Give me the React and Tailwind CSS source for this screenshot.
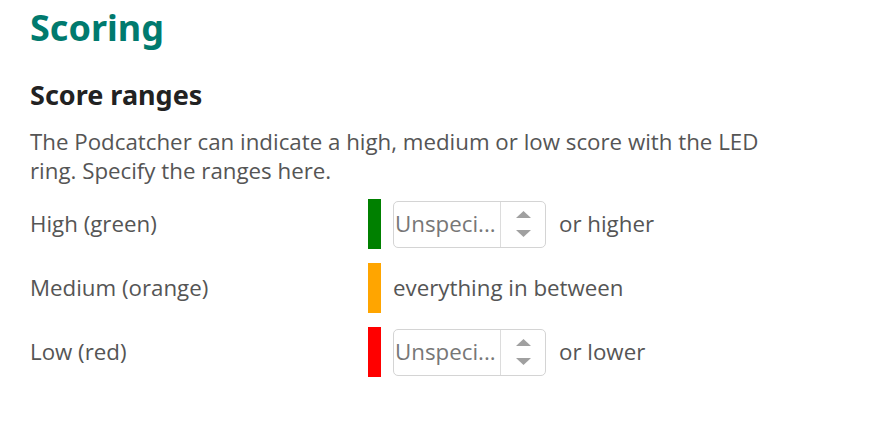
import React from 'react'

function Spinner() {
  return (
    <div className="flex flex-col items-center justify-center gap-[12px] w-[45px] border-l border-[#dcdcdc] h-full">
      <svg width="15" height="7" viewBox="0 0 15 7"><path d="M7.5 0 L15 7 L0 7 Z" fill="#a0a0a0" /></svg>
      <svg width="15" height="7" viewBox="0 0 15 7"><path d="M0 0 L15 0 L7.5 7 Z" fill="#a0a0a0" /></svg>
    </div>
  )
}

function NumberBox() {
  return (
    <div className="flex items-center w-[153px] h-[47px] border border-[#d4d4d4] rounded-[5px] bg-white">
      <span className="flex-1 pl-[1px] text-[#777] text-[22.3px]">Unspeci...</span>
      <Spinner />
    </div>
  )
}

function Row({ label, color, children }) {
  return (
    <div className="flex items-center h-[50px]">
      <div className="w-[338px] text-[#555]">{label}</div>
      <div className={`w-[13px] h-[50px] ${color}`} />
      <div className="flex items-center gap-[13px] ml-[12px]">{children}</div>
    </div>
  )
}

export default function App() {
  return (
    <div className="w-[890px] h-[428px] bg-white px-[30px] pt-[4px]" style={{ fontFamily: '"Open Sans", sans-serif' }}>
      <h1 className="text-[36px] font-bold text-[#007a6e] leading-[48px]" style={{ fontFamily: '"Noto Sans", sans-serif' }}>Scoring</h1>
      <h2 className="mt-[27px] text-[27px] font-bold text-[#222] leading-[32px]" style={{ fontFamily: '"Noto Sans", sans-serif' }}>Score ranges</h2>
      <p className="mt-[16px] max-w-[750px] text-[22.3px] leading-[29px] text-[#555]">
        The Podcatcher can indicate a high, medium or low score with the LED ring. Specify the ranges here.
      </p>
      <div className="mt-[14px] flex flex-col gap-[14px] text-[22.3px]">
        <Row label="High (green)" color="bg-[#008000]">
          <NumberBox />
          <span className="text-[#555]">or higher</span>
        </Row>
        <Row label="Medium (orange)" color="bg-[#ffa500]">
          <span className="text-[#555]">everything in between</span>
        </Row>
        <Row label="Low (red)" color="bg-[#ff0000]">
          <NumberBox />
          <span className="text-[#555]">or lower</span>
        </Row>
      </div>
    </div>
  )
}
